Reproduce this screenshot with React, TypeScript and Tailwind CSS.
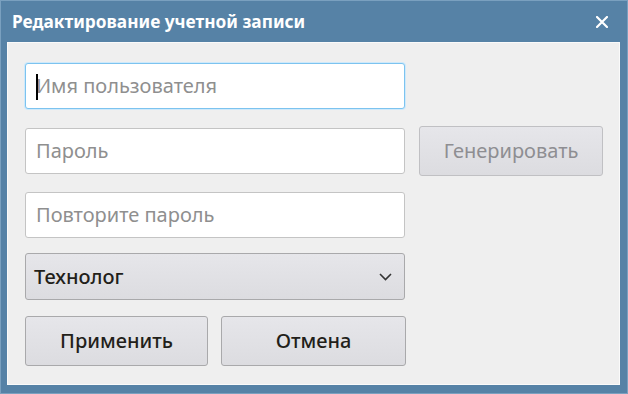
import React from "react";

const font = { fontFamily: '"Noto Sans", "Open Sans", sans-serif' };

function Field({ placeholder, focused }: { placeholder: string; focused?: boolean }) {
  return (
    <div
      className={`relative flex h-[46px] w-[380px] items-center rounded-[3px] border bg-white pl-[10px] ${
        focused ? "border-[#7cc3ef] shadow-[0_0_0_1px_#cfe9fa]" : "border-[#c4c4c4]"
      }`}
    >
      {focused && <div className="absolute left-[10px] top-[10px] h-[26px] w-[1.5px] bg-black" />}
      <span className="text-[20px] text-[#8f8f8f]">{placeholder}</span>
    </div>
  );
}

function Btn({ children, w, disabled }: { children: React.ReactNode; w: string; disabled?: boolean }) {
  return (
    <div
      className={`flex h-[50px] ${w} items-center justify-center rounded-[3px] border border-[#a9a9ab] bg-gradient-to-b from-[#e6e6ea] to-[#dcdce0] text-[20px] ${
        disabled ? "text-[#8e8e92] border-[#c0c0c3]" : "font-medium text-[#231f1a]"
      }`}
    >
      {children}
    </div>
  );
}

export default function App() {
  return (
    <div
      style={font}
      className="flex h-[394px] w-[628px] flex-col border border-[#7aa0bf] bg-[#5682a6]"
    >
      <div className="flex h-[41px] items-center justify-between pl-[11px] pr-[19px]">
        <span className="text-[17.3px] font-bold text-white">Редактирование учетной записи</span>
        <svg width="12" height="12" viewBox="0 0 12 12">
          <path d="M1 1L11 11M11 1L1 11" stroke="white" strokeWidth="2.2" strokeLinecap="round" />
        </svg>
      </div>
      <div className="mb-[8px] ml-[6px] mr-[7px] flex flex-1 flex-col gap-[17px] border border-[#fafafa] bg-[#efefef] pl-[17px] pt-[20px]">
        <Field placeholder="Имя пользователя" focused />
        <div className="flex items-center gap-[14px]">
          <Field placeholder="Пароль" />
          <Btn w="w-[184px]" disabled>
            Генерировать
          </Btn>
        </div>
        <div className="-mt-[1px]">
          <Field placeholder="Повторите пароль" />
        </div>
        <div className="-mt-[2px] flex h-[47px] w-[380px] items-center justify-between rounded-[3px] border border-[#a9a9ab] bg-gradient-to-b from-[#e6e6ea] to-[#dcdce0] pl-[8px] pr-[12px]">
          <span className="text-[20px] font-medium text-[#231f1a]">Технолог</span>
          <svg width="13" height="8" viewBox="0 0 13 8">
            <path d="M1 1L6.5 6.5L12 1" stroke="#333" strokeWidth="1.6" fill="none" />
          </svg>
        </div>
        <div className="-mt-[1px] flex gap-[13px]">
          <Btn w="w-[183px]">Применить</Btn>
          <Btn w="w-[185px]">Отмена</Btn>
        </div>
      </div>
    </div>
  );
}
